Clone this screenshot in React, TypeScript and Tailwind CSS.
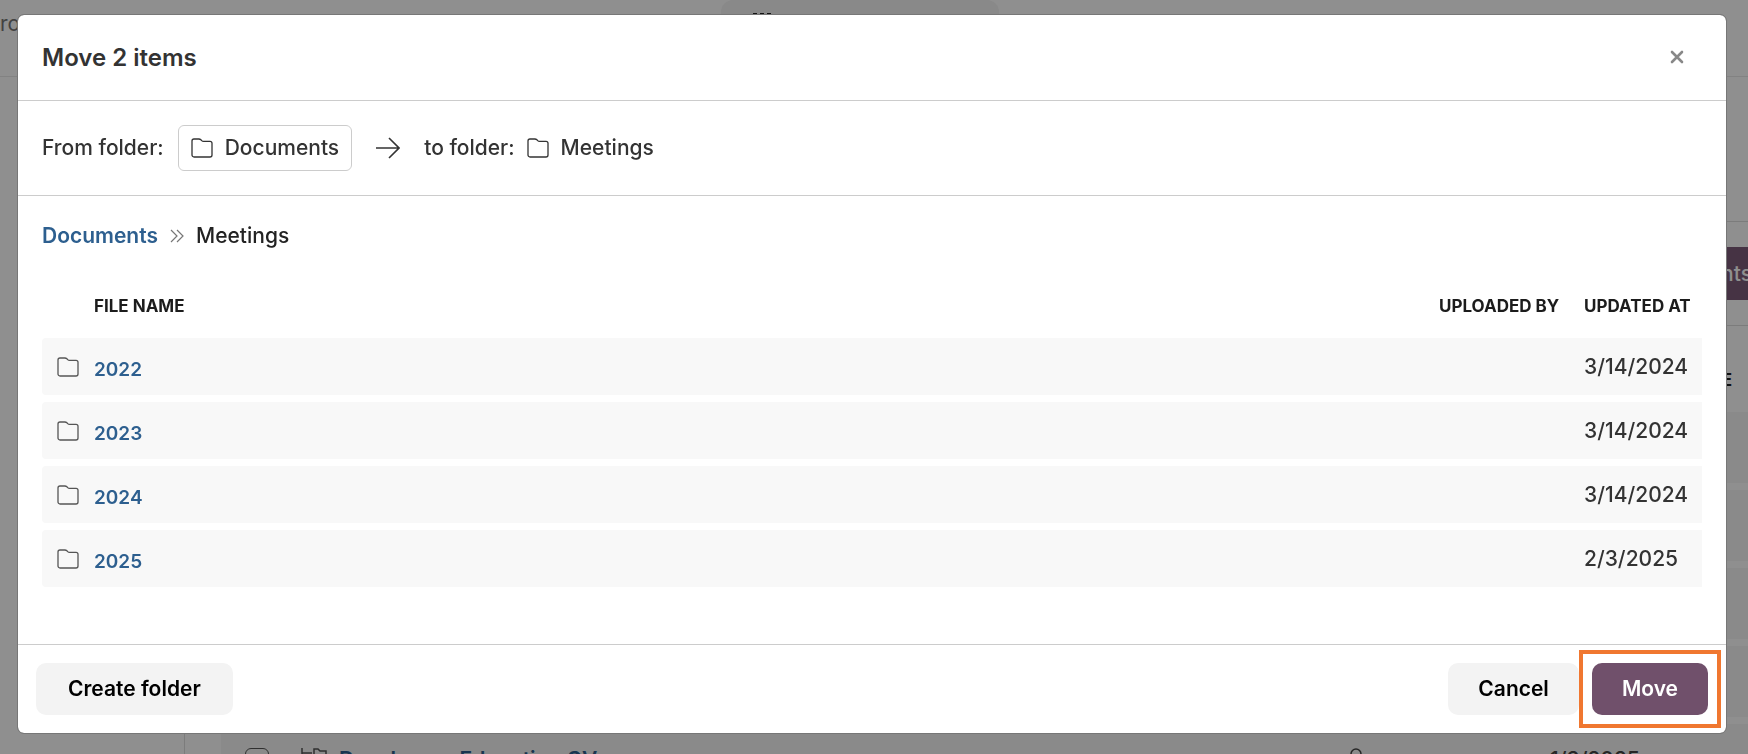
const files = [
  { name: "2022", updatedAt: "3/14/2024" },
  { name: "2023", updatedAt: "3/14/2024" },
  { name: "2024", updatedAt: "3/14/2024" },
  { name: "2025", updatedAt: "2/3/2025" },
];

function FolderIcon({ className = "" }: { className?: string }) {
  return (
    <svg width="22" height="20" viewBox="0 0 22 20" fill="none" stroke="currentColor" strokeWidth="1.3" className={`shrink-0 ${className}`}>
      <path d="M1 3a2 2 0 0 1 2-2h4.800c.9 0 1.500.2 2.100.8l.8.8c.5.5 1.100.7 1.900.7H19a2 2 0 0 1 2 2V17a2 2 0 0 1-2 2H3a2 2 0 0 1-2-2z" />
    </svg>
  );
}

function PageBehind() {
  return (
    <div aria-hidden="true" className="flex h-screen flex-col overflow-hidden bg-white text-[21px]">
      <header className="grid h-[77px] shrink-0 grid-cols-[1fr_278px_1fr] border-b border-[#e8e8e8] pr-7">
        <p className="mt-2 text-[#777]">ro</p>
        <div className="rounded-xl bg-[#f4f4f4] px-8 pt-[13px]">
          <svg width="18" height="18" viewBox="0 0 18 18" fill="#222">
            <path d="M0 0h4v4H0zM7 0h4v4H7zM14 0h4v4h-4zM0 7h4v4H0zM7 7h4v4H7zM14 7h4v4h-4zM0 14h4v4H0zM7 14h4v4H7zM14 14h4v4h-4z" />
          </svg>
        </div>
      </header>
      <div className="flex grow">
        <aside className="w-[185px] shrink-0 border-r border-[#ddd]"></aside>
        <div className="grow pt-36">
          <div className="flex h-[105px] items-center justify-end border-y border-[#ddd]">
            <button tabIndex={-1} className="-mr-9 h-[53px] rounded-lg bg-[#7d5b79] px-8 font-medium text-white">
              Add documents
            </button>
          </div>
          <div className="pl-9">
            <p className="flex h-[86px] items-center justify-end pt-6 pr-4 text-[17px] font-bold text-[#1c1c1c]">DATE</p>
            <div className="flex flex-col gap-[7px]">
              <div className="h-[71px] bg-[#f6f6f6]"></div>
              <div className="h-[71px] bg-[#f6f6f6]"></div>
              <div className="h-[71px] bg-[#f6f6f6]"></div>
              <div className="h-[71px] bg-[#f6f6f6]"></div>
              <div className="flex h-[71px] items-center bg-[#f6f6f6] pl-6 text-[#444]">
                <span className="size-6 rounded-md border border-[#555]"></span>
                <svg width="26" height="24" viewBox="0 0 26 24" fill="none" stroke="#555" strokeWidth="1.5" className="ml-8">
                  <path d="M1 0v14h8M1 5h10M13 1h4l2 2h6v8H13zM13 14h4l2 2h6v7H13z" />
                </svg>
                <span className="ml-3 font-semibold text-[#2d5f8f]">Developers Education CV</span>
                <svg width="20" height="24" viewBox="0 0 20 24" fill="none" stroke="#444" strokeWidth="1.5" className="ml-auto">
                  <circle cx="10" cy="6" r="5" />
                  <path d="M1 23c0-6 4-9 9-9s9 3 9 9" />
                </svg>
                <span className="w-[382px] pl-[184px] font-medium">1/3/2025</span>
              </div>
            </div>
          </div>
        </div>
      </div>
    </div>
  );
}

export default function App() {
  return (
    <div className="font-[Inter,sans-serif]">
      <PageBehind />
      <div className="fixed inset-0 bg-black/44 pt-[15px] pr-[22px] pb-[21px] pl-[18px]">
        <section role="dialog" aria-labelledby="move-title" className="flex h-full flex-col rounded-md bg-white text-[21px] font-medium text-[#333] outline outline-[#777]">
          <header className="flex h-[86px] shrink-0 items-center justify-between border-b border-[#ccc] pr-10 pl-6">
            <h1 id="move-title" className="text-2xl font-semibold">Move 2 items</h1>
            <button aria-label="Close" className="text-[#888]">
              <svg width="18" height="18" viewBox="0 0 18 18" fill="none" stroke="currentColor" strokeWidth="2.6" strokeLinecap="round">
                <path d="M4 3l10 10M14 3L4 13" />
              </svg>
            </button>
          </header>

          <div className="flex h-[95px] shrink-0 items-center border-b border-[#ccc] px-6">
            <span>From folder:</span>
            <button className="ml-[14px] flex h-[46px] items-center gap-3 rounded-md border border-[#ccc] px-3">
              <FolderIcon />
              Documents
            </button>
            <svg width="24" height="22" viewBox="0 0 24 22" fill="none" stroke="currentColor" strokeWidth="1.6" className="mx-6">
              <path d="M0 11h23M13 1l10 10-10 10" />
            </svg>
            <span>to folder:</span>
            <FolderIcon className="mx-3" />
            <span>Meetings</span>
          </div>

          <main className="grow px-6">
            <nav className="flex h-20 items-center text-[#222]">
              <a href="#documents" className="font-semibold text-[#2d5f8f]">Documents</a>
              <svg width="14" height="14" viewBox="0 0 14 14" fill="none" stroke="#777" strokeWidth="1.2" className="mx-3">
                <path d="M1 1l6 6-6 6M7 1l6 6-6 6" />
              </svg>
              <span>Meetings</span>
            </nav>

            <table className="w-full border-separate border-spacing-x-0 border-spacing-y-[7px] text-left">
              <thead className="text-[17px] text-[#1c1c1c]">
                <tr className="h-12">
                  <th className="w-[52px]"></th>
                  <th className="p-0">FILE NAME</th>
                  <th className="w-[145px] p-0">UPLOADED BY</th>
                  <th className="w-[118px] p-0">UPDATED AT</th>
                </tr>
              </thead>
              <tbody>
                {files.map((file) => (
                  <tr key={file.name} className="h-[57px] bg-[#f8f8f8]">
                    <td className="rounded-l-sm pl-[15px] text-[#555]">
                      <FolderIcon />
                    </td>
                    <td className="pt-1">
                      <a href={`#${file.name}`} className="text-[19px] font-semibold text-[#2d5f8f]">{file.name}</a>
                    </td>
                    <td></td>
                    <td>{file.updatedAt}</td>
                  </tr>
                ))}
              </tbody>
            </table>
          </main>

          <footer className="flex shrink-0 items-center gap-[13px] border-t border-[#ccc] p-[18px] font-semibold text-black">
            <button className="mr-auto h-[52px] rounded-[10px] bg-[#f3f3f3] px-8">Create folder</button>
            <button className="h-[52px] rounded-[10px] bg-[#f3f3f3] px-[30px]">Cancel</button>
            <div className="relative">
              <button className="h-[52px] rounded-[10px] bg-[#70506b] px-[30px] text-white">Move</button>
              <span className="pointer-events-none absolute -inset-[13px] border-4 border-[#f07730]"></span>
            </div>
          </footer>
        </section>
      </div>
    </div>
  );
}
